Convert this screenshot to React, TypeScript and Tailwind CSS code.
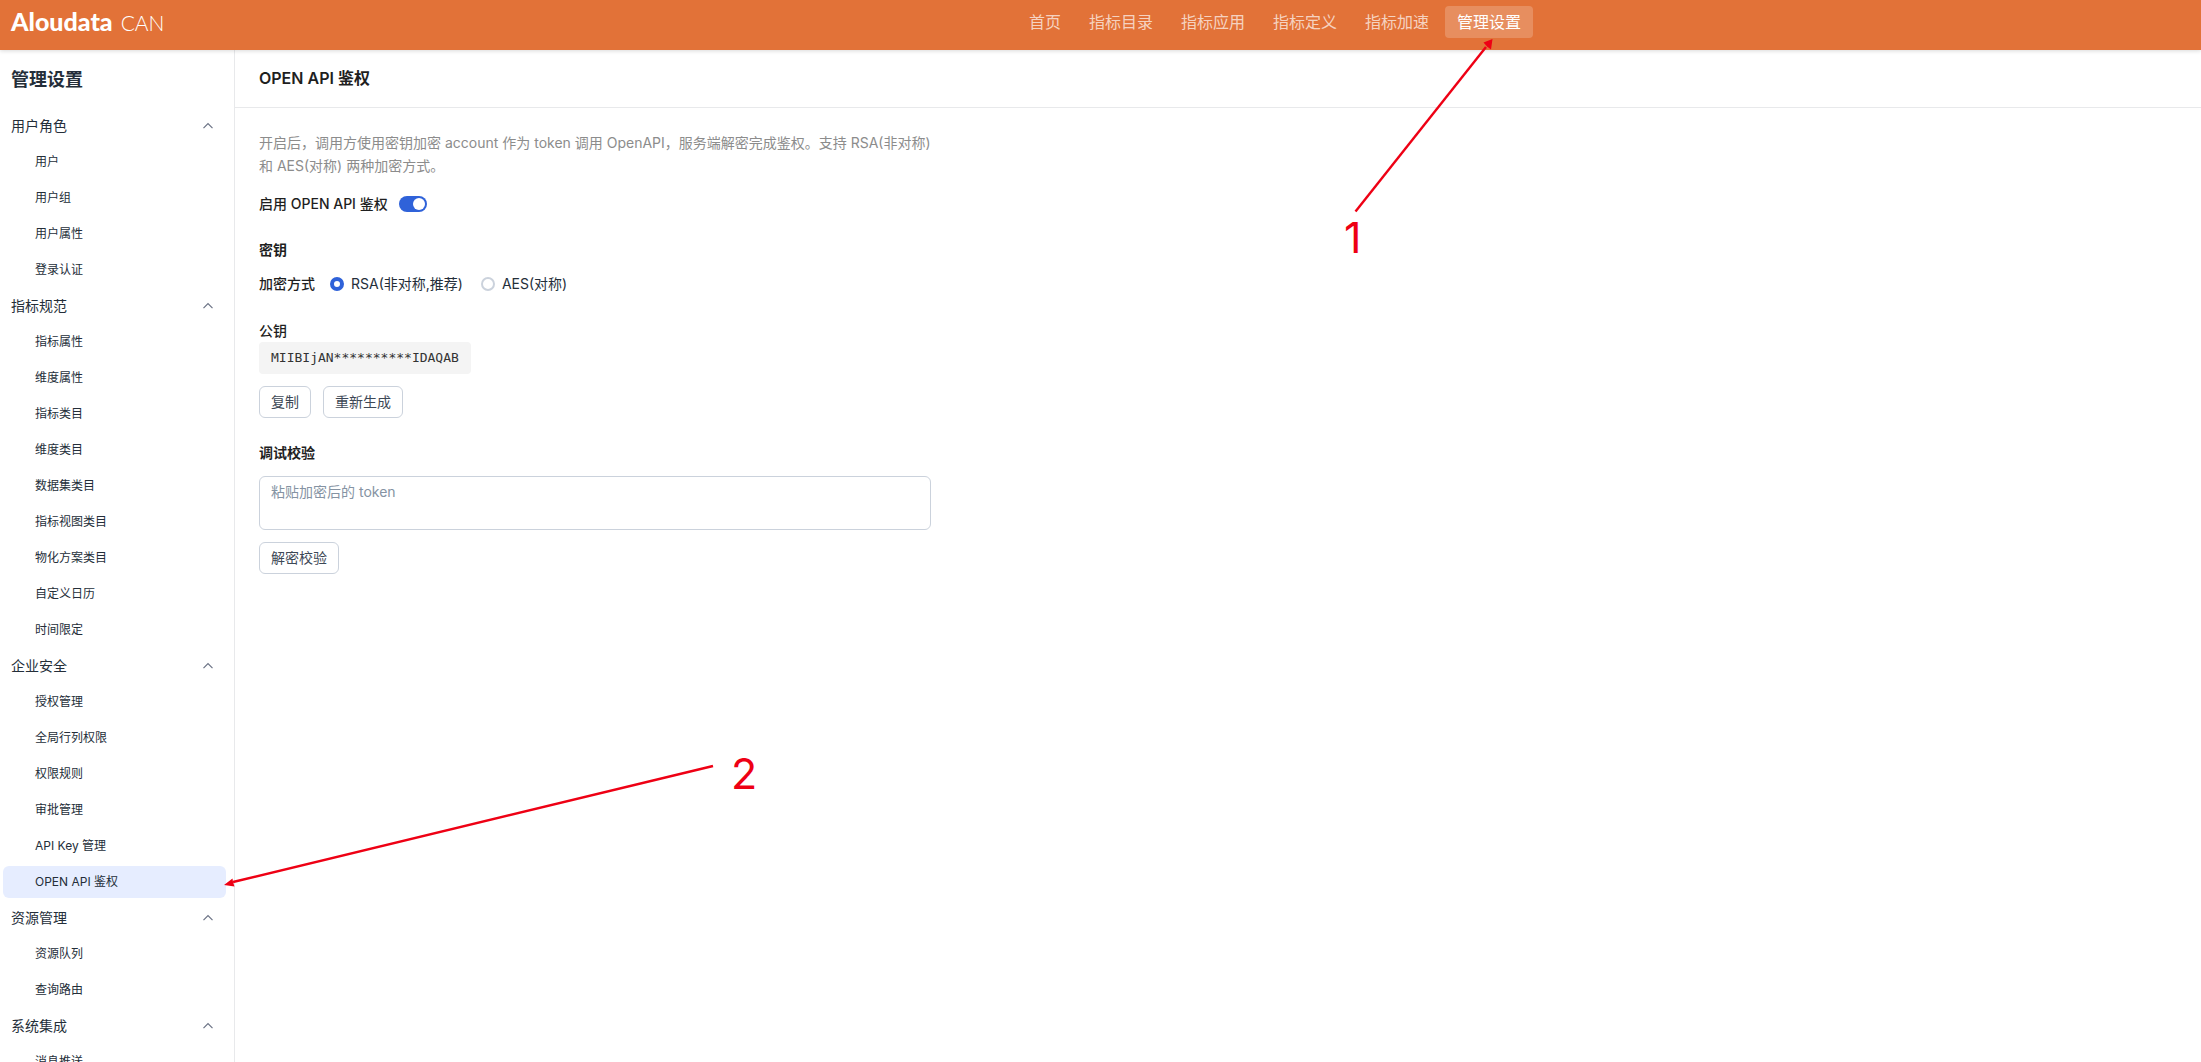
import { useState } from "react";

const NAV = ["首页", "指标目录", "指标应用", "指标定义", "指标加速", "管理设置"];

const MENU = [
  { title: "用户角色", items: ["用户", "用户组", "用户属性", "登录认证"] },
  {
    title: "指标规范",
    items: [
      "指标属性",
      "维度属性",
      "指标类目",
      "维度类目",
      "数据集类目",
      "指标视图类目",
      "物化方案类目",
      "自定义日历",
      "时间限定",
    ],
  },
  {
    title: "企业安全",
    items: ["授权管理", "全局行列权限", "权限规则", "审批管理", "API Key 管理", "OPEN API 鉴权"],
  },
  { title: "资源管理", items: ["资源队列", "查询路由"] },
  { title: "系统集成", items: ["消息推送"] },
];

function Header() {
  return (
    <header className="relative z-10 flex h-[50px] shrink-0 items-start bg-[#e27238] shadow-[0_1px_4px_rgba(0,0,0,0.15)]">
      <a
        href="#"
        aria-label="Aloudata CAN"
        className="flex w-[1017px] items-baseline gap-2 pt-[7px] pl-[11px] leading-7 text-white"
      >
        <span className="font-['Lato'] text-[25px] font-black">Aloudata</span>
        <span className="font-['Lato'] text-[21px] font-light">CAN</span>
      </a>
      <nav className="flex gap-1 pt-1.5">
        {NAV.map((label) => (
          <a
            key={label}
            href="#"
            className={
              label === "管理设置"
                ? "h-8 rounded bg-white/20 px-3 text-base leading-8 text-white"
                : "h-8 rounded px-3 text-base leading-8 text-white/70"
            }
          >
            {label}
          </a>
        ))}
      </nav>
    </header>
  );
}

function Chevron({ open }: { open: boolean }) {
  return (
    <svg
      width="12"
      height="12"
      viewBox="0 0 12 12"
      fill="none"
      stroke="#6b7285"
      strokeWidth="1.2"
      className={open ? "" : "rotate-180"}
    >
      <path d="M1.5 8.2 6 3.7l4.5 4.5" />
    </svg>
  );
}

function Sidebar() {
  const [active, setActive] = useState("OPEN API 鉴权");
  const [closed, setClosed] = useState<string[]>([]);

  const toggle = (title: string) =>
    setClosed((prev) =>
      prev.includes(title) ? prev.filter((t) => t !== title) : [...prev, title],
    );

  return (
    <aside className="w-[235px] shrink-0 overflow-y-auto border-r border-[#e8e9eb] [scrollbar-width:none]">
      <h2 className="px-[11px] pt-4 pb-[14px] text-lg leading-7 font-semibold text-[#242e39]">
        管理设置
      </h2>
      {MENU.map((group) => (
        <section key={group.title}>
          <button
            type="button"
            onClick={() => toggle(group.title)}
            className="flex h-9 w-full items-center justify-between pr-5 pl-[11px] text-sm text-[#242e39]"
          >
            {group.title}
            <Chevron open={!closed.includes(group.title)} />
          </button>
          {!closed.includes(group.title) && (
            <ul>
              {group.items.map((item) => (
                <li key={item} className="py-0.5 pr-2 pl-[3px]">
                  <button
                    type="button"
                    onClick={() => setActive(item)}
                    className={
                      item === active
                        ? "flex h-8 w-full items-center rounded-md bg-[#e6edff] pl-8 text-xs text-[#242e39]"
                        : "flex h-8 w-full items-center rounded-md pl-8 text-xs text-[#242e39]"
                    }
                  >
                    {item}
                  </button>
                </li>
              ))}
            </ul>
          )}
        </section>
      ))}
    </aside>
  );
}

const buttonClass =
  "h-8 rounded-md border border-[#cbd2dc] bg-white px-[11px] text-sm text-[#3d4856]";

const radioClass =
  "size-[14px] appearance-none rounded-full border-2 border-[#cbd2dc] bg-white checked:border-4 checked:border-[#2f62d9]";

function AuthSettings() {
  const [enabled, setEnabled] = useState(true);
  const [mode, setMode] = useState("rsa");

  return (
    <main className="min-w-0 flex-1">
      <div className="border-b border-[#e8e9eb] px-6 pt-4 pb-[17px]">
        <h1 className="text-base leading-6 font-semibold text-[#1f1f1f]">OPEN API 鉴权</h1>
      </div>
      <div className="max-w-[720px] px-6 pt-[23px] text-sm text-[#1f1f1f]">
        <p className="leading-[23px] text-[#8c8c8c]">
          开启后，调用方使用密钥加密 account 作为 token 调用 OpenAPI，服务端解密完成鉴权。支持
          RSA(非对称) 和 AES(对称) 两种加密方式。
        </p>

        <div className="mt-4 flex h-[22px] items-center gap-[11px]">
          <label htmlFor="enable-auth" className="font-medium">
            启用 OPEN API 鉴权
          </label>
          <input
            id="enable-auth"
            type="checkbox"
            role="switch"
            checked={enabled}
            onChange={(e) => setEnabled(e.target.checked)}
            className="h-4 w-7 appearance-none rounded-full bg-[#bfc5cf] p-0.5 before:block before:size-3 before:rounded-full before:bg-white checked:bg-[#2f62d9] checked:before:ml-3"
          />
        </div>

        <h3 className="mt-6 leading-[22px] font-semibold">密钥</h3>
        <div className="mt-3 flex h-[22px] items-center" role="radiogroup" aria-labelledby="mode">
          <span id="mode" className="font-medium">
            加密方式
          </span>
          <label className="ml-[15px] flex items-center gap-[7px] text-[#242e39]">
            <input
              type="radio"
              name="mode"
              checked={mode === "rsa"}
              onChange={() => setMode("rsa")}
              className={radioClass}
            />
            RSA(非对称,推荐)
          </label>
          <label className="ml-[18px] flex items-center gap-[7px] text-[#242e39]">
            <input
              type="radio"
              name="mode"
              checked={mode === "aes"}
              onChange={() => setMode("aes")}
              className={radioClass}
            />
            AES(对称)
          </label>
        </div>

        <div className="mt-[25px] leading-[22px] font-medium">公钥</div>
        <code className="block h-8 w-fit rounded bg-[#f4f4f4] px-3 font-['DejaVu_Sans_Mono',monospace] text-[13px] leading-8 text-[#333]">
          MIIBIjAN**********IDAQAB
        </code>
        <div className="mt-3 flex gap-3">
          <button type="button" className={buttonClass}>
            复制
          </button>
          <button type="button" className={buttonClass}>
            重新生成
          </button>
        </div>

        <h3 className="mt-6 leading-[22px] font-semibold">
          <label htmlFor="token">调试校验</label>
        </h3>
        <textarea
          id="token"
          rows={2}
          placeholder="粘贴加密后的 token"
          className="mt-3 block h-[54px] w-full resize-none rounded-md border border-[#cbd2dc] px-[11px] py-1 leading-[22px] placeholder:text-[#8593a3]"
        />
        <button type="button" className={`mt-3 ${buttonClass}`}>
          解密校验
        </button>
      </div>
    </main>
  );
}

// numbered arrows pointing at the two steps
function Annotations() {
  return (
    <svg
      width="1600"
      height="920"
      viewBox="0 0 1600 920"
      className="pointer-events-none absolute top-0 left-0 z-20"
      fill="#ee0014"
      stroke="#ee0014"
    >
      <path d="M1355.5 211.5 1486 47" strokeWidth="2.4" />
      <path d="M1492.5 39 1491 49.5 1487 46.5 1483.5 42.5Z" stroke="none" />
      <path d="M713 766 233 882" strokeWidth="2.4" />
      <path d="M224 885 232.5 878.5 233 882 234.5 886.5Z" stroke="none" />
      <text x="1344" y="253" fontSize="43" stroke="none">
        1
      </text>
      <text x="731" y="789" fontSize="43" stroke="none">
        2
      </text>
    </svg>
  );
}

export default function App() {
  return (
    <div className="relative flex h-screen flex-col overflow-hidden bg-white font-['Inter','Noto_Sans_CJK_SC',sans-serif]">
      <Header />
      <div className="flex min-h-0 flex-1">
        <Sidebar />
        <AuthSettings />
      </div>
      <Annotations />
    </div>
  );
}
